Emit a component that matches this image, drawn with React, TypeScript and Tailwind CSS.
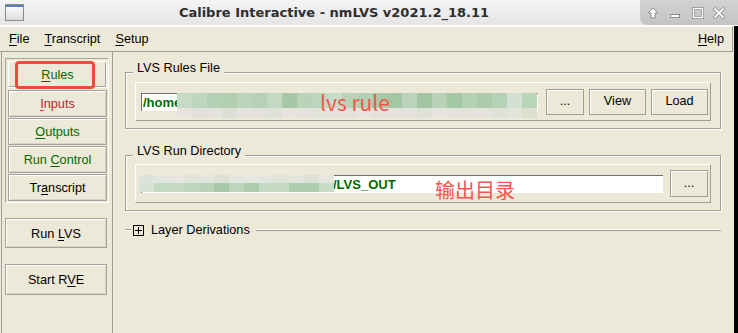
import React from 'react';

// blurred-out path cells (redaction mosaic in the screenshot)
const rulesTop = ['#c6dbc6', '#bfd7bf', '#b4d0b4', '#b2cfb2', '#bad4ba', '#b6d1b6', '#c3d9c3', '#a7c8a7', '#b9d3b9', '#bdd6bd', '#c7dcc7', '#b9d3b9', '#b4d0b4', '#a9caa9', '#a3c6a3', '#bad3ba', '#a2c5a2', '#b7d2b7', '#a4c7a4', '#b4d1b4', '#abcbab', '#b6d2b6', '#d3e1d3', '#b8d5b8'];
const rulesBottom = ['#e6e4dd', '#e2e1d9', '#e4e3db', '#dcdfd3', '#e5e3dc', '#e3e2da', '#dfe1d6', '#e6e4dd', '#e4e3db', '#e1e2d8', '#e5e4dc', '#e3e3da', '#e7e5de', '#e2e2d9', '#e4e3dc', '#e5e4dc', '#dfe0d6', '#e6e4dd', '#e4e3db', '#e3e3da', '#e5e4dc', '#dfe1d6', '#e2e3d9', '#dce0d3'];
const dirTop = ['#dde3da', '#e3e6df', '#e4e6df', '#dfe3da', '#e2e5de', '#dde2d8', '#e3e6df', '#e5e6e0', '#e2e5de', '#dfe3da', '#e3e6df', '#dde2d8', '#e4e6df'];
const dirBottom = ['#d5e2d4', '#c2d9c2', '#c3d9c3', '#bdd6bd', '#b9d3b9', '#a8c9a8', '#bcd5bc', '#acccac', '#c4dac4', '#c3d9c3', '#afcdaf', '#afcdaf', '#c8dcc8'];

function MosaicRow({ cells, h }: { cells: string[]; h: string }) {
  return (
    <div className={`flex ${h}`}>
      {cells.map((c, i) => (
        <div key={i} className="w-[15px] h-full shrink-0" style={{ backgroundColor: c }} />
      ))}
    </div>
  );
}

function U({ children }: { children: React.ReactNode }) {
  return <span className="underline underline-offset-2">{children}</span>;
}

function SideButton({ children, className = '' }: { children: React.ReactNode; className?: string }) {
  return (
    <div
      className={`relative flex items-center justify-center pt-[2px] border border-[#a3a29b] shadow-[inset_1px_1px_0_#fff,inset_-1px_-1px_0_#d8d5c8] ${className}`}
    >
      {children}
    </div>
  );
}

function Btn({ children, className = '' }: { children: React.ReactNode; className?: string }) {
  return (
    <div
      className={`flex items-center justify-center shrink-0 border border-[#9f9e97] shadow-[inset_1px_1px_0_#fff] ${className}`}
    >
      {children}
    </div>
  );
}

function TitleControls() {
  return (
    <div className="w-[98px] h-[25px] shrink-0 rounded-bl-[7px] bg-gradient-to-b from-[#d2d2d2] to-[#c3c3c3] flex items-center pl-[7px]">
      <svg width="12" height="12" viewBox="0 0 12 12">
        <path d="M6 1 L11 6 L8 6 L8 11 L4 11 L4 6 L1 6 Z" fill="#fff" stroke="#8d8d8d" strokeWidth="1" strokeLinejoin="round" />
      </svg>
      <svg className="ml-[10px]" width="12" height="12" viewBox="0 0 12 12">
        <rect x="1.5" y="7.5" width="9" height="3" fill="#fff" stroke="#8d8d8d" />
      </svg>
      <svg className="ml-[11px]" width="12" height="12" viewBox="0 0 12 12">
        <rect x="1.5" y="1.5" width="9" height="9" fill="none" stroke="#8d8d8d" strokeWidth="3" />
        <rect x="1.5" y="1.5" width="9" height="9" fill="none" stroke="#fff" strokeWidth="1.4" />
      </svg>
      <svg className="ml-[9px]" width="12" height="12" viewBox="0 0 12 12">
        <path d="M2 2 L10 10 M10 2 L2 10" stroke="#8d8d8d" strokeWidth="3.4" strokeLinecap="round" />
        <path d="M2 2 L10 10 M10 2 L2 10" stroke="#fff" strokeWidth="1.8" strokeLinecap="round" />
      </svg>
    </div>
  );
}

export default function App() {
  return (
    <div className="w-[738px] h-[333px] overflow-hidden bg-[#ece9d8] flex flex-col font-['Liberation_Sans',Arial,sans-serif] text-[12.7px] leading-[15px] text-black">
      {/* title bar */}
      <div className="h-[26px] shrink-0 flex border-b border-white bg-gradient-to-b from-[#f4f4f4] to-[#e5e5e5]">
        <div className="w-[28px] flex items-center justify-center">
          <div className="w-[19px] h-[17px] border border-[#8c8c8c] bg-gradient-to-b from-[#ffffff] to-[#dcdcdc] flex flex-col">
            <div className="h-[2px] bg-[#5b80c0]" />
          </div>
        </div>
        <div className="flex-1 flex items-center justify-center font-['DejaVu_Sans',sans-serif] font-bold text-[13px] text-[#2e2e2e]">
          Calibre Interactive - nmLVS v2021.2_18.11
        </div>
        <TitleControls />
      </div>

      <div className="flex-1 flex min-h-0">
        <div className="flex-1 flex flex-col">
          {/* menu bar */}
          <div className="h-[26px] shrink-0 mr-px flex items-center gap-[15px] pl-[9px] pr-[8px] border-t border-white border-b border-r border-b-[#a09f98] border-r-[#a09f98]">
            <span><U>F</U>ile</span>
            <span><U>T</U>ranscript</span>
            <span><U>S</U>etup</span>
            <span className="ml-auto"><U>H</U>elp</span>
          </div>

          <div className="flex-1 flex min-h-0">
            {/* left panel */}
            <div className="ml-px w-[112px] shrink-0 border-l border-r border-[#a09f98] flex flex-col">
              <div className="mt-[6px] ml-[3px] w-[104px] border-t border-l border-t-[#a5a49d] border-l-[#a5a49d] border-b border-r border-b-white border-r-white pt-[2px] pl-[2px] pb-px flex flex-col">
                <div className="relative w-[99px] h-[27px] mb-[2px] pt-[2px] flex items-center justify-center border border-white shadow-[inset_-1px_-1px_0_#a3a29b] text-[#006a00]">
                  <span><U>R</U>ules</span>
                  <div className="absolute left-[6px] -top-px w-[80px] h-[28px] border-[3px] border-[#ef4b3d] rounded-[4px]" />
                </div>
                <SideButton className="w-[99px] h-[27px] mb-px text-[#bb2530]"><span><U>I</U>nputs</span></SideButton>
                <SideButton className="w-[99px] h-[27px] mb-px text-[#006a00]"><span><U>O</U>utputs</span></SideButton>
                <SideButton className="w-[99px] h-[27px] mb-px text-[#006a00]"><span>Run <U>C</U>ontrol</span></SideButton>
                <SideButton className="w-[99px] h-[27px]"><span>Tr<U>a</U>nscript</span></SideButton>
              </div>
              <SideButton className="ml-[3px] mt-[15px] w-[102px] h-[30px]"><span>Run <U>L</U>VS</span></SideButton>
              <SideButton className="ml-[3px] mt-[16px] w-[102px] h-[31px]"><span>Start R<U>V</U>E</span></SideButton>
            </div>

            {/* right content */}
            <div className="flex-1 pl-[12px] pr-[13px] flex flex-col">
              {/* LVS Rules File */}
              <div className="relative mt-[20px] h-[57px] border border-[#9f9e97] shadow-[inset_1px_1px_0_#fff,1px_1px_0_#fff] pt-[9px] px-[9px]">
                <span className="absolute -top-[12px] left-[7px] px-[4px] bg-[#ece9d8]">LVS Rules File</span>
                <div className="h-[39px] border-t border-l border-white border-b border-r border-b-[#9f9e97] border-r-[#9f9e97] flex items-center pl-[5px] pr-[2px]">
                  <div className="relative w-[397px] h-[18px] shrink-0 bg-white border-t border-l border-[#6f6f6f] flex items-center pl-px">
                    <span className="font-bold text-[13px] text-[#006a00]">/home</span>
                    <div className="absolute left-[35px] -top-px flex flex-col">
                      <MosaicRow cells={rulesTop} h="h-[15px]" />
                      <MosaicRow cells={rulesBottom} h="h-[10px]" />
                    </div>
                    <span className="absolute left-[178px] -top-[2px] font-['Noto_Sans_CJK_SC',sans-serif] text-[21px] leading-[21px] text-[#f2564c]">lvs rule</span>
                  </div>
                  <Btn className="ml-[8px] w-[38px] h-[26px]">...</Btn>
                  <Btn className="ml-[5px] w-[57px] h-[26px]">View</Btn>
                  <Btn className="ml-[5px] w-[57px] h-[26px]">Load</Btn>
                </div>
              </div>

              {/* LVS Run Directory */}
              <div className="relative mt-[26px] h-[56px] border border-[#9f9e97] shadow-[inset_1px_1px_0_#fff,1px_1px_0_#fff] pt-[8px] px-[9px]">
                <span className="absolute -top-[12px] left-[7px] px-[4px] bg-[#ece9d8]">LVS Run Directory</span>
                <div className="h-[39px] border-t border-l border-white border-b border-r border-b-[#9f9e97] border-r-[#9f9e97] flex items-center pl-[5px] pr-[2px]">
                  <div className="relative w-[522px] h-[18px] shrink-0 bg-white border-t border-l border-[#6f6f6f] flex items-center">
                    <span className="w-[191px] shrink-0" />
                    <span className="font-bold text-[13px] text-[#006a00]">/LVS_OUT</span>
                    <div className="absolute -left-[3px] -top-px flex flex-col">
                      <MosaicRow cells={dirTop} h="h-[8px]" />
                      <MosaicRow cells={dirBottom} h="h-[9px]" />
                    </div>
                    <span className="absolute left-[293px] top-[4px] font-['Noto_Sans_CJK_SC',sans-serif] text-[20px] leading-[20px] text-[#f2564c]">输出目录</span>
                  </div>
                  <Btn className="ml-[7px] w-[38px] h-[27px]">...</Btn>
                </div>
              </div>

              {/* Layer Derivations */}
              <div className="mt-[12px] h-[14px] flex items-center">
                <div className="w-[6px] h-[2px] border-t border-[#a09f98] border-b border-b-white" />
                <div className="ml-[2px] w-[11px] h-[11px] border border-black flex items-center justify-center">
                  <svg width="9" height="9" viewBox="0 0 9 9">
                    <path d="M1 4.5 H8 M4.5 1 V8" stroke="#000" strokeWidth="1" />
                  </svg>
                </div>
                <span className="ml-[7px]">Layer Derivations</span>
                <div className="ml-[6px] flex-1 h-[2px] border-t border-white border-b border-b-[#a09f98]" />
              </div>
            </div>
          </div>
        </div>
        <div className="w-[4px] shrink-0 bg-black" />
      </div>
    </div>
  );
}
